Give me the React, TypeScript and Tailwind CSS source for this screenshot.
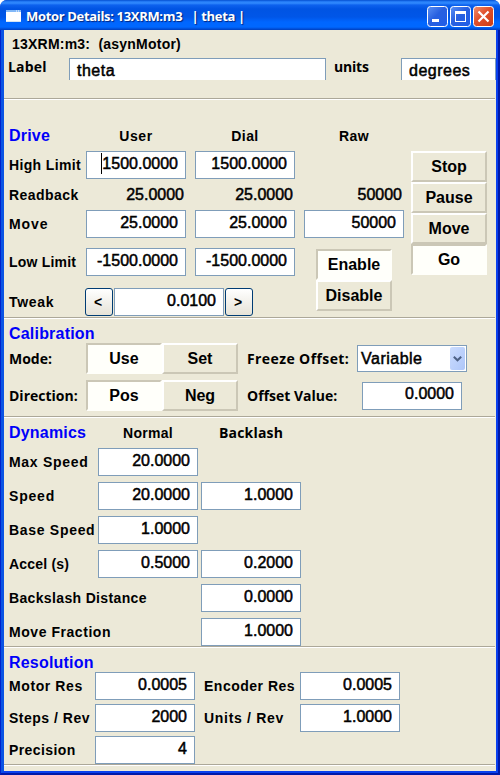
import type { ReactNode } from "react";

function Label({ className = "", children }: { className?: string; children: ReactNode }) {
  return (
    <span className={`shrink-0 whitespace-pre text-[14px] font-bold leading-none ${className}`}>
      {children}
    </span>
  );
}

function Heading({ className = "", children }: { className?: string; children: ReactNode }) {
  return (
    <h2 className={`shrink-0 text-[16px] font-bold leading-none tracking-[0.2px] text-[#0000fa] ${className}`}>{children}</h2>
  );
}

const valueText = "text-[16px] leading-none [-webkit-text-stroke:0.5px_black]";

function Field({ value, caret = false, className = "w-[100px]" }: { value: string; caret?: boolean; className?: string }) {
  return (
    <div
      className={`flex h-7 shrink-0 items-center justify-end border border-[#7f9db9] bg-white pr-[7px] pb-[3px] ${valueText} ${className}`}
    >
      {caret && <span className="h-[21px] w-px bg-black" />}
      {value}
    </div>
  );
}

function Toggle({ on = false, children }: { on?: boolean; children: ReactNode }) {
  return (
    <button
      className={`flex h-[31px] w-[76px] shrink-0 items-center justify-center border-2 text-[16px] font-bold leading-none ${
        on
          ? "border-t-[#cbc7b6] border-r-[#fffffa] border-b-[#fffffa] border-l-[#cbc7b6] bg-[#fffffa]"
          : "border-t-white border-r-[#cbc7b6] border-b-[#cbc7b6] border-l-white bg-[#ece9d8]"
      }`}
    >
      {children}
    </button>
  );
}

function Arrow({ children }: { children: ReactNode }) {
  return (
    <button className="flex h-7 w-7 shrink-0 items-center justify-center rounded-[3px] border border-[#003c74] bg-linear-to-b from-white to-[#e6e3d8] pr-[2px] text-[14px] font-bold leading-none">
      {children}
    </button>
  );
}

function Readback({ children }: { children: string }) {
  return <span className={`w-[100px] pr-[2px] text-right ${valueText}`}>{children}</span>;
}

function Section({ className, children }: { className: string; children: ReactNode }) {
  return (
    <section className={`mr-px shrink-0 border-b border-[#aca899] shadow-[0_1px_0_white] ${className}`}>
      {children}
    </section>
  );
}

const humanist = "font-['Open_Sans',sans-serif]";

export default function App() {
  return (
    <div className="h-[775px] w-[500px] overflow-hidden bg-white font-['Liberation_Sans',Arial,sans-serif] text-black">
      <div className="flex h-full flex-col overflow-hidden rounded-t-[7px] bg-[#0038d8]">
        <header className="flex h-[30px] shrink-0 items-center bg-[linear-gradient(180deg,#0048c8_0px,#1c72f0_1px,#328cff_3px,#0d62ee_5px,#0054e3_9px,#0056e8_17px,#0066ff_22px,#0068ff_27px,#004bd5_29px,#0040bb_30px)] pl-[6px] pr-[6px]">
          <svg className="mt-[2px] h-[13px] w-[16px] shrink-0" viewBox="0 0 16 13">
            <rect x="0" y="0" width="15" height="12" fill="#fff" />
            <rect x="0" y="0" width="15" height="2" fill="#82b8f8" />
            <path d="M10 1h1M12 1h1" stroke="#fff" />
            <path d="M0 11.5H15" stroke="#d6e4f2" />
          </svg>
          <h1
            className={`ml-[4px] mt-[3px] flex-1 whitespace-pre text-[13px] font-bold leading-none tracking-[-0.33px] text-white [text-shadow:1px_1px_1px_#00247c] ${humanist}`}
          >
            Motor Details: 13XRM:m3   | theta |
          </h1>
          <div className="mt-[3px] flex gap-[2px]">
            <svg className="h-[21px] w-[21px]" viewBox="0 0 21 21">
              <defs>
                <linearGradient id="blue" x1="0" y1="0" x2="1" y2="1">
                  <stop offset="0" stopColor="#5b91f5" />
                  <stop offset=".45" stopColor="#2860e0" />
                  <stop offset="1" stopColor="#1f5de8" />
                </linearGradient>
                <linearGradient id="red" x1="0" y1="0" x2="1" y2="1">
                  <stop offset="0" stopColor="#f09070" />
                  <stop offset=".45" stopColor="#e0502c" />
                  <stop offset="1" stopColor="#cc3c14" />
                </linearGradient>
              </defs>
              <rect x=".5" y=".5" width="20" height="20" rx="3" fill="url(#blue)" stroke="#fff" />
              <rect x="5" y="13" width="7" height="3" fill="#fff" />
            </svg>
            <svg className="h-[21px] w-[21px]" viewBox="0 0 21 21">
              <rect x=".5" y=".5" width="20" height="20" rx="3" fill="url(#blue)" stroke="#fff" />
              <rect x="5.5" y="5.5" width="10" height="10" fill="none" stroke="#fff" />
              <rect x="5" y="5" width="11" height="3" fill="#fff" />
            </svg>
            <svg className="h-[21px] w-[21px]" viewBox="0 0 21 21">
              <rect x=".5" y=".5" width="20" height="20" rx="3" fill="url(#red)" stroke="#fff" />
              <path d="M5.5 5.5 15.5 15.5M15.5 5.5 5.5 15.5" stroke="#fff" strokeWidth="2.2" />
            </svg>
          </div>
        </header>

        <div className="flex min-h-0 flex-1 border-r-2 border-b-2 border-l border-[#0019a8] border-l-[#0022cc]">
          <main className="flex w-full flex-col border-r-2 border-b-2 border-l-3 border-[#0a40ee] border-l-[#0a54e4] bg-[#ece9d8]">
            <Section className="h-[69px]">
              <div className="flex h-[28px] items-center pl-[8px]">
                <Label className="tracking-[0.22px]">13XRM:m3:  (asynMotor)</Label>
              </div>
              <div className="-mr-px flex h-[22px]">
                <Label className={`w-[65px] pl-[4px] pt-[2px] tracking-[0.2px] ${humanist}`}>Label</Label>
                <div className={`w-[257px] border border-b-0 border-[#7f9db9] bg-white pl-[7px] pt-[4px] tracking-[0.5px] ${valueText}`}>
                  theta
                </div>
                <Label className={`w-[75px] pl-[8px] pt-[2px] tracking-[-0.2px] ${humanist}`}>units</Label>
                <div className={`w-[95px] border border-b-0 border-[#7f9db9] bg-white pl-[7px] pt-[4px] tracking-[0.5px] ${valueText}`}>
                  degrees
                </div>
              </div>
            </Section>

            <Section className="flex h-[219px]">
              <div className="w-[400px] shrink-0">
                <div className="flex h-[52px] items-end pb-[7px] pl-[5px]">
                  <Heading className="w-[77px]">Drive</Heading>
                  <Label className="w-[100px] pb-px text-center tracking-[0.6px]">User</Label>
                  <Label className="ml-[9px] w-[100px] pb-px text-center tracking-[0.4px]">Dial</Label>
                  <Label className="ml-[9px] w-[100px] pb-px text-center tracking-[0.4px]">Raw</Label>
                </div>
                <div className="flex h-7 items-center">
                  <Label className="w-[82px] pl-[5px] tracking-[0.35px]">High Limit</Label>
                  <Field value="1500.0000" caret />
                  <Field value="1500.0000" className="ml-[9px] w-[100px]" />
                </div>
                <div className="flex h-[31px] items-center gap-[9px]">
                  <Label className="-mr-[9px] w-[82px] pl-[5px] tracking-[0.45px]">Readback</Label>
                  <Readback>25.0000</Readback>
                  <Readback>25.0000</Readback>
                  <Readback>50000</Readback>
                </div>
                <div className="flex h-7 items-center">
                  <Label className="w-[82px] pl-[5px] tracking-[0.9px]">Move</Label>
                  <Field value="25.0000" />
                  <Field value="25.0000" className="ml-[9px] w-[100px]" />
                  <Field value="50000" className="ml-[9px] w-[100px]" />
                </div>
                <div className="flex pt-[10px]">
                  <div className="w-[291px]">
                    <div className="flex h-7 items-center">
                      <Label className="w-[82px] pl-[5px] tracking-[0.2px]">Low Limit</Label>
                      <Field value="-1500.0000" />
                      <Field value="-1500.0000" className="ml-[9px] w-[100px]" />
                    </div>
                    <div className="mt-[12px] flex h-7 items-center">
                      <Label className="w-[81px] pl-[5px] tracking-[0.7px]">Tweak</Label>
                      <Arrow>&lt;</Arrow>
                      <Field value="0.0100" className="ml-px w-[110px]" />
                      <div className="ml-px">
                        <Arrow>&gt;</Arrow>
                      </div>
                    </div>
                  </div>
                  <div className="ml-[21px] mt-px flex flex-col">
                    <Toggle on>Enable</Toggle>
                    <Toggle>Disable</Toggle>
                  </div>
                </div>
              </div>
              <div className="ml-[7px] mt-[52px] flex flex-col">
                <Toggle>Stop</Toggle>
                <Toggle>Pause</Toggle>
                <Toggle>Move</Toggle>
                <Toggle on>Go</Toggle>
              </div>
            </Section>

            <Section className="h-[99px]">
              <div className="flex h-[25px] items-end pb-px pl-[5px]">
                <Heading>Calibration</Heading>
              </div>
              <div className="flex h-[31px] items-center">
                <Label className={`w-[82px] pl-[5px] ${humanist}`}>Mode:</Label>
                <Toggle on>Use</Toggle>
                <Toggle>Set</Toggle>
                <Label className={`ml-[9px] w-[110px] tracking-[0.4px] ${humanist}`}>Freeze Offset:</Label>
                <div className="flex h-[27px] w-[110px] items-center justify-between border border-[#7f9db9] bg-white pl-[3px] pr-px">
                  <span className={`tracking-[0.5px] ${valueText}`}>Variable</span>
                  <span className="flex h-[23px] w-[15px] items-center justify-center rounded-[2px] bg-linear-to-br from-[#cbdcfe] to-[#aec6f8]">
                    <svg className="h-[6px] w-[9px]" viewBox="0 0 9 6">
                      <path d="M.8.8 4.5 4.3 8.2.8" fill="none" stroke="#4d6185" strokeWidth="2" />
                    </svg>
                  </span>
                </div>
              </div>
              <div className="mt-[6px] flex h-[31px] items-center">
                <Label className={`w-[82px] pl-[5px] ${humanist}`}>Direction:</Label>
                <Toggle on>Pos</Toggle>
                <Toggle>Neg</Toggle>
                <Label className={`ml-[9px] w-[115px] ${humanist}`}>Offset Value:</Label>
                <Field value="0.0000" />
              </div>
            </Section>

            <Section className="h-[230px]">
              <div className="flex h-[31px] items-center pl-[5px]">
                <Heading className="w-[89px]">Dynamics</Heading>
                <Label className="w-[100px] text-center tracking-[0.3px]">Normal</Label>
                <Label className={`ml-[3px] w-[100px] text-center tracking-[0.2px] ${humanist}`}>Backlash</Label>
              </div>
              <div className="flex flex-col gap-[6px]">
                <div className="flex h-7 items-center">
                  <Label className="w-[94px] pl-[5px] tracking-[0.7px]">Max Speed</Label>
                  <Field value="20.0000" />
                </div>
                <div className="flex h-7 items-center">
                  <Label className="w-[94px] pl-[5px] tracking-[0.8px]">Speed</Label>
                  <Field value="20.0000" />
                  <Field value="1.0000" className="ml-[3px] w-[100px]" />
                </div>
                <div className="flex h-7 items-center">
                  <Label className="w-[94px] pl-[5px] tracking-[0.7px]">Base Speed</Label>
                  <Field value="1.0000" />
                </div>
                <div className="flex h-7 items-center">
                  <Label className="w-[94px] pl-[5px] tracking-[0.2px]">Accel (s)</Label>
                  <Field value="0.5000" />
                  <Field value="0.2000" className="ml-[3px] w-[100px]" />
                </div>
                <div className="flex h-7 items-center">
                  <Label className="w-[197px] pl-[5px] tracking-[0.35px]">Backslash Distance</Label>
                  <Field value="0.0000" />
                </div>
                <div className="flex h-7 items-center">
                  <Label className="w-[197px] pl-[5px] tracking-[0.55px]">Move Fraction</Label>
                  <Field value="1.0000" />
                </div>
              </div>
            </Section>

            <Section className="h-[118px]">
              <div className="flex h-[25px] items-end pb-px pl-[5px]">
                <Heading>Resolution</Heading>
              </div>
              <div className="flex flex-col gap-[4px]">
                <div className="flex h-7 items-center">
                  <Label className="w-[91px] pl-[5px] tracking-[0.6px]">Motor Res</Label>
                  <Field value="0.0005" />
                  <Label className="ml-[9px] w-[96px] tracking-[0.5px]">Encoder Res</Label>
                  <Field value="0.0005" />
                </div>
                <div className="flex h-7 items-center">
                  <Label className="w-[91px] pl-[5px] tracking-[0.5px]">Steps / Rev</Label>
                  <Field value="2000" />
                  <Label className="ml-[9px] w-[96px] tracking-[0.7px]">Units / Rev</Label>
                  <Field value="1.0000" />
                </div>
                <div className="flex h-7 items-center">
                  <Label className="w-[91px] pl-[5px] tracking-[0.4px]">Precision</Label>
                  <Field value="4" />
                </div>
              </div>
            </Section>
          </main>
        </div>
      </div>
    </div>
  );
}
